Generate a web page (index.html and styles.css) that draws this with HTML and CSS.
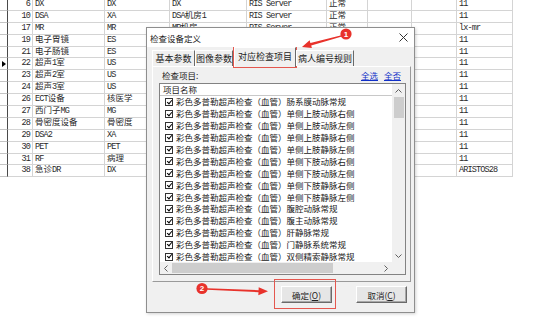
FILE: index.html
```html
<!DOCTYPE html>
<html lang="zh-CN">
<head>
<meta charset="utf-8">
<title>检查设备定义</title>
<link rel="stylesheet" href="styles.css">
</head>
<body>
<div class="grid">
  <div class="row"><span class="ind"></span><span class="num">6</span><span>DX</span><span>DX</span><span>DX</span><span>RIS Server</span><span class="zh">正常</span><span></span><span></span><span>11</span></div>
  <div class="row"><span class="ind"></span><span class="num">10</span><span>DSA</span><span>XA</span><span>DSA<i class="zh">机房</i>1</span><span>RIS Server</span><span class="zh">正常</span><span></span><span></span><span>11</span></div>
  <div class="row"><span class="ind"></span><span class="num">17</span><span>MR</span><span>MR</span><span>MR<i class="zh">机房</i></span><span>RIS Server</span><span class="zh">正常</span><span></span><span></span><span>lx-mr</span></div>
  <div class="row"><span class="ind"></span><span class="num">19</span><span class="zh">电子胃镜</span><span>ES</span><span></span><span></span><span></span><span></span><span></span><span>11</span></div>
  <div class="row"><span class="ind"></span><span class="num">21</span><span class="zh">电子肠镜</span><span>ES</span><span></span><span></span><span></span><span></span><span></span><span>11</span></div>
  <div class="row"><span class="ind"><i class="tri"></i></span><span class="num">22</span><span><i class="zh">超声</i>1<i class="zh">室</i></span><span>US</span><span></span><span></span><span></span><span></span><span></span><span>11</span></div>
  <div class="row"><span class="ind"></span><span class="num">23</span><span><i class="zh">超声</i>2<i class="zh">室</i></span><span>US</span><span></span><span></span><span></span><span></span><span></span><span>11</span></div>
  <div class="row"><span class="ind"></span><span class="num">24</span><span><i class="zh">超声</i>3<i class="zh">室</i></span><span>US</span><span></span><span></span><span></span><span></span><span></span><span>11</span></div>
  <div class="row"><span class="ind"></span><span class="num">26</span><span>ECT<i class="zh">设备</i></span><span class="zh">核医学</span><span></span><span></span><span></span><span></span><span></span><span>11</span></div>
  <div class="row"><span class="ind"></span><span class="num">27</span><span><i class="zh">西门子</i>MG</span><span>MG</span><span></span><span></span><span></span><span></span><span></span><span>11</span></div>
  <div class="row"><span class="ind"></span><span class="num">28</span><span class="zh">骨密度设备</span><span class="zh">骨密度</span><span></span><span></span><span></span><span></span><span></span><span>11</span></div>
  <div class="row"><span class="ind"></span><span class="num">29</span><span>DSA2</span><span>XA</span><span></span><span></span><span></span><span></span><span></span><span>11</span></div>
  <div class="row"><span class="ind"></span><span class="num">30</span><span>PET</span><span>PET</span><span></span><span></span><span></span><span></span><span></span><span>11</span></div>
  <div class="row"><span class="ind"></span><span class="num">31</span><span>RF</span><span class="zh">病理</span><span></span><span></span><span></span><span></span><span></span><span>11</span></div>
  <div class="row"><span class="ind"></span><span class="num">38</span><span><i class="zh">急诊</i>DR</span><span>DX</span><span></span><span></span><span></span><span></span><span></span><span>ARISTOS28</span></div>
</div>

<div class="dialog">
  <div class="titlebar">
    <span class="title">检查设备定义</span>
    <svg class="close" width="9" height="9" viewBox="0 0 9 9"><path d="M0.5 0.5 L8.5 8.5 M8.5 0.5 L0.5 8.5" stroke="#333" stroke-width="1"/></svg>
  </div>
  <div class="tabs">
    <span class="tab t1">基本参数</span>
    <span class="tab t2">图像参数</span>
    <span class="tab t3 active">对应检查项目</span>
    <span class="tab t4">病人编号规则</span>
  </div>
  <div class="panel">
    <div class="panel-head">
      <span class="label">检查项目:</span>
      <span class="links"><a>全选</a><a>全否</a></span>
    </div>
    <div class="listbox">
      <div class="list-main">
        <div class="list-header"><span>项目名称</span></div>
        <div class="item"><i class="cb"></i>彩色多普勒超声检查（血管）肠系膜动脉常规</div>
        <div class="item"><i class="cb"></i>彩色多普勒超声检查（血管）单侧上肢动脉右侧</div>
        <div class="item"><i class="cb"></i>彩色多普勒超声检查（血管）单侧上肢动脉左侧</div>
        <div class="item"><i class="cb"></i>彩色多普勒超声检查（血管）单侧上肢静脉右侧</div>
        <div class="item"><i class="cb"></i>彩色多普勒超声检查（血管）单侧上肢静脉左侧</div>
        <div class="item"><i class="cb"></i>彩色多普勒超声检查（血管）单侧下肢动脉右侧</div>
        <div class="item"><i class="cb"></i>彩色多普勒超声检查（血管）单侧下肢动脉左侧</div>
        <div class="item"><i class="cb"></i>彩色多普勒超声检查（血管）单侧下肢静脉右侧</div>
        <div class="item"><i class="cb"></i>彩色多普勒超声检查（血管）单侧下肢静脉左侧</div>
        <div class="item"><i class="cb"></i>彩色多普勒超声检查（血管）腹腔动脉常规</div>
        <div class="item"><i class="cb"></i>彩色多普勒超声检查（血管）腹主动脉常规</div>
        <div class="item"><i class="cb"></i>彩色多普勒超声检查（血管）肝静脉常规</div>
        <div class="item"><i class="cb"></i>彩色多普勒超声检查（血管）门静脉系统常规</div>
        <div class="item"><i class="cb"></i>彩色多普勒超声检查（血管）双侧精索静脉常规</div>
      </div>
      <div class="vscroll">
        <span class="arr"><svg width="7" height="4" viewBox="0 0 7 4"><path d="M0.5 3.5 L3.5 0.5 L6.5 3.5" fill="none" stroke="#606060"/></svg></span>
        <span class="vthumb"></span>
        <span class="track"></span>
        <span class="arr"><svg width="7" height="4" viewBox="0 0 7 4"><path d="M0.5 0.5 L3.5 3.5 L6.5 0.5" fill="none" stroke="#606060"/></svg></span>
      </div>
      <div class="hscroll">
        <span class="arr"><svg width="4" height="7" viewBox="0 0 4 7"><path d="M3.5 0.5 L0.5 3.5 L3.5 6.5" fill="none" stroke="#606060"/></svg></span>
        <span class="hthumb"></span>
        <span class="track"></span>
        <span class="arr"><svg width="4" height="7" viewBox="0 0 4 7"><path d="M0.5 0.5 L3.5 3.5 L0.5 6.5" fill="none" stroke="#606060"/></svg></span>
      </div>
      <div class="corner"></div>
    </div>
  </div>
  <div class="buttons">
    <button class="btn">确定(<u>O</u>)</button>
    <button class="btn">取消(<u>C</u>)</button>
  </div>
</div>

<div class="mark mark-tab"></div>
<div class="mark mark-ok"></div>

<svg class="annot" width="554" height="335" viewBox="0 0 554 335">
  <polygon points="341.5,35.2 341.9,36.6 311.2,45.6 311.9,48.0 302,47 309.6,40.3 310.4,43.0" fill="#e8322b"/>
  <circle cx="346" cy="34" r="5.6" fill="#e8322b"/>
  <text x="346" y="36.8" class="badge-num">1</text>
  <polygon points="207,288.3 207,289.7 258.5,292.2 258.3,295.3 268,291.3 258.7,287.3 258.6,290.2" fill="#e8322b"/>
  <circle cx="202" cy="288.5" r="5.6" fill="#e8322b"/>
  <text x="202" y="291.3" class="badge-num">2</text>
</svg>
</body>
</html>
```
FILE: styles.css
```css
* { box-sizing: border-box; }
html, body { margin: 0; padding: 0; }
body {
  width: 554px;
  height: 335px;
  overflow: hidden;
  position: relative;
  background: #fff;
  color: #222;
  font-family: "Noto Sans CJK SC", sans-serif;
}

/* background data grid */
.grid { margin-top: -1px; width: 513px; }
.row {
  display: grid;
  grid-template-columns: 8px 25px 72px 65px 77px 80px 41px 44px 45px 56px;
  height: 11.9px;
}
.row > span {
  border-right: 1px solid #d4d4d4;
  border-bottom: 1px solid #d4d4d4;
  font: 8.5px/11px "Liberation Mono", "Noto Sans CJK SC", monospace;
  letter-spacing: -0.85px;
  padding-left: 2px;
  white-space: nowrap;
  overflow: hidden;
  color: #2a2a2a;
}
.row > span.ind {
  border-right: 1px solid #4a4a4a;
  border-bottom-color: #c4c4c4;
  padding: 0;
  display: flex;
  align-items: center;
}
.row > span.num { text-align: right; padding: 0 2px 0 0; }
.zh { letter-spacing: 0; font-style: normal; }
.row > span.zh { letter-spacing: 0; }
.tri {
  width: 0; height: 0;
  margin-left: 2px;
  border-left: 4px solid #000;
  border-top: 3px solid transparent;
  border-bottom: 3px solid transparent;
}

/* dialog */
.dialog {
  position: absolute;
  left: 146px;
  top: 27px;
  width: 269px;
  height: 286px;
  background: #f0f0f0;
  border: 1px solid #8e8e8e;
  box-shadow: 1px 1px 3px rgba(0,0,0,0.18);
  display: flex;
  flex-direction: column;
  font-size: 8.5px;
}
.titlebar {
  height: 19px;
  flex: none;
  background: #fff;
  display: flex;
  align-items: center;
  justify-content: space-between;
  padding: 0 6px 0 3px;
  line-height: 12px;
}
.title { font-size: 8.5px; color: #222; }
.close { display: block; }

.tabs {
  height: 19px;
  flex: none;
  display: flex;
  align-items: flex-end;
  padding-left: 5px;
  position: relative;
  z-index: 1;
}
.tab {
  height: 16px;
  font-size: 9px;
  line-height: 15px;
  text-align: center;
  border-top: 1px solid #fff;
  border-left: 1px solid #fff;
  border-right: 1px solid #6a6a6a;
  color: #222;
  white-space: nowrap;
}
.t1 { width: 43px; }
.t2 { width: 38px; }
.t3 { width: 62px; margin-left: 1px; }
.t4 { width: 58px; }
.tab.active {
  height: 20px;
  line-height: 18px;
  margin-bottom: -1px;
  background: #f0f0f0;
}

.panel {
  height: 216px;
  flex: none;
  width: 259px;
  margin-left: 5px;
  border: 1px solid;
  border-color: #fff #9a9a9a #9a9a9a #fff;
  display: flex;
  flex-direction: column;
}
.panel-head {
  height: 16px;
  display: flex;
  align-items: center;
  justify-content: space-between;
  padding: 0 9px 0 9px;
  line-height: 12px;
}
.label { font-size: 8.5px; }
.links { display: flex; gap: 6px; }
.links a { color: #1030c8; text-decoration: underline; font-size: 8.5px; }

.listbox {
  margin-left: 6px;
  width: 247px;
  height: 192px;
  border: 1px solid #828282;
  background: #fff;
  display: grid;
  grid-template-columns: 1fr 13px;
  grid-template-rows: 1fr 12px;
  overflow: hidden;
}
.list-main { overflow: hidden; min-width: 0; }
.list-header {
  height: 12px;
  border-bottom: 1px solid #c8c8c8;
  display: flex;
  align-items: center;
  padding-left: 3px;
  line-height: 11px;
}
.list-header span { font-size: 8.5px; color: #222; }
.item {
  height: 11.9px;
  display: flex;
  align-items: center;
  padding-left: 5px;
  font-size: 8.5px;
  line-height: 11px;
  white-space: nowrap;
  color: #222;
}
.cb {
  flex: none;
  width: 8px;
  height: 8px;
  margin-right: 3px;
  border: 1px solid #333;
  background: #fff;
  position: relative;
}
.cb::after {
  content: "";
  position: absolute;
  left: 1.6px;
  top: -0.2px;
  width: 2px;
  height: 4px;
  border-right: 1.4px solid #000;
  border-bottom: 1.4px solid #000;
  transform: rotate(40deg);
}

.vscroll {
  grid-row: 1;
  grid-column: 2;
  background: #f0f0f0;
  display: flex;
  flex-direction: column;
  align-items: center;
}
.vscroll .arr {
  height: 13px;
  width: 13px;
  display: flex;
  align-items: center;
  justify-content: center;
  flex: none;
}
.vthumb { width: 10px; height: 21px; background: #cdcdcd; flex: none; }
.vscroll .track { flex: 1; }
.hscroll {
  grid-row: 2;
  grid-column: 1;
  background: #f0f0f0;
  display: flex;
  align-items: center;
}
.hscroll .arr {
  width: 12px;
  height: 12px;
  display: flex;
  align-items: center;
  justify-content: center;
  flex: none;
}
.hthumb { width: 161px; height: 10px; background: #cdcdcd; flex: none; }
.hscroll .track { flex: 1; }
.corner { grid-row: 2; grid-column: 2; background: #f0f0f0; }

.buttons {
  display: flex;
  justify-content: flex-end;
  gap: 24px;
  padding: 4px 7px 0 0;
}
.btn {
  width: 51px;
  height: 17px;
  padding: 0;
  margin: 0;
  font-family: "Noto Sans CJK SC", sans-serif;
  font-size: 8.5px;
  line-height: 14px;
  color: #222;
  background: #e6e6e6;
  border: 1px solid;
  border-color: #fff #6a6a6a #6a6a6a #fff;
  box-shadow: inset -1px -1px 0 #a8a8a8;
}
.btn u { text-decoration: underline; }

/* annotations over the screenshot */
.mark {
  position: absolute;
  border: 1px solid #e4574f;
}
.mark-tab { left: 233px; top: 47px; width: 64px; height: 21px; }
.mark-ok { left: 274px; top: 279px; width: 62px; height: 30px; }
.annot { position: absolute; left: 0; top: 0; pointer-events: none; }
.badge-num {
  font-family: "Liberation Sans", sans-serif;
  font-size: 8px;
  font-weight: bold;
  fill: #fff;
  text-anchor: middle;
}
```
